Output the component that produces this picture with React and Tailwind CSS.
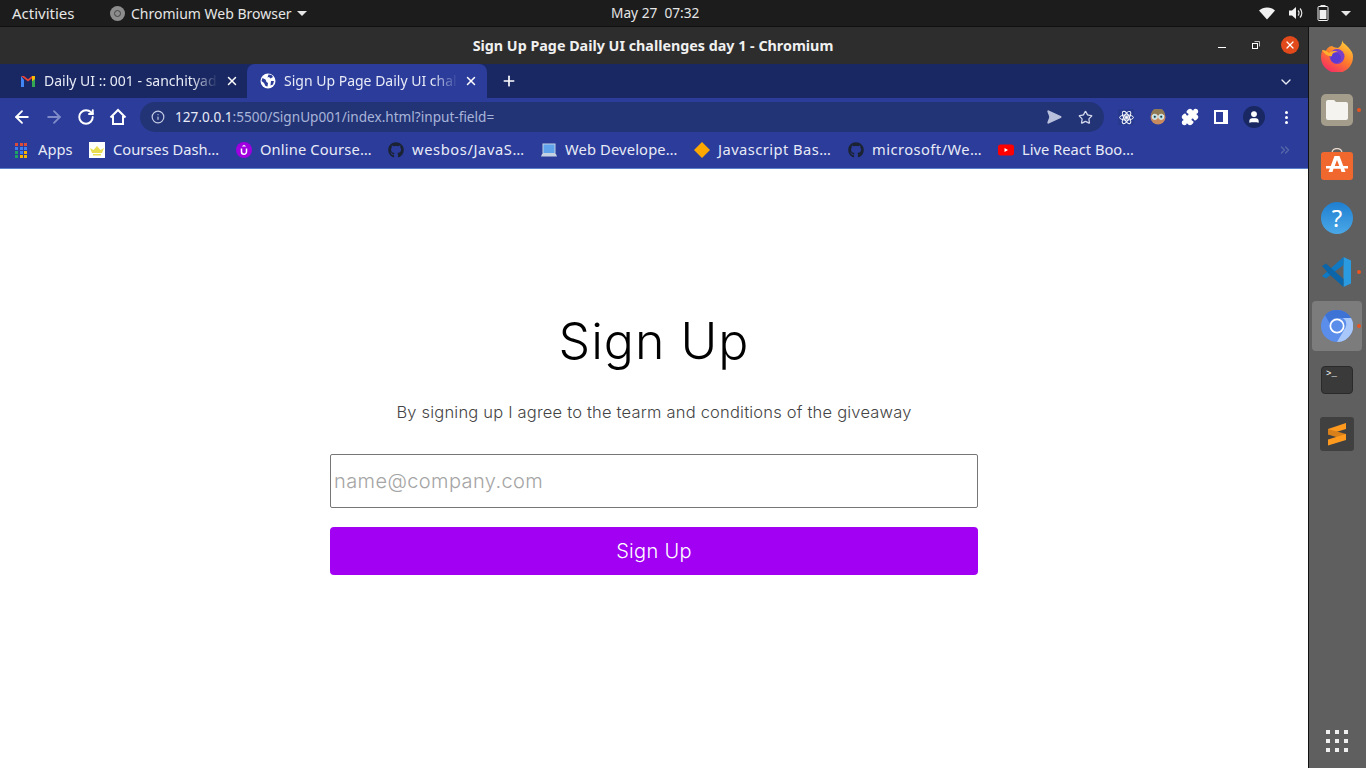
import { FaGithub } from 'react-icons/fa';
import { ArrowLeft, ArrowRight, RotateCw, Info, Star, Puzzle, User, X, Plus, ChevronDown, ChevronsRight, SendHorizontal } from 'lucide-react';

const bookmarks = [
    { label: 'Courses Dash…', width: 'w-[107px]', icon: <CrownIcon /> },
    { label: 'Online Course…', width: 'w-[112px] tracking-[0.15px]', icon: <UdemyIcon /> },
    { label: 'wesbos/JavaS…', width: 'w-[113px] tracking-[0.6px]', icon: <FaGithub className="w-4 h-4 text-[#1b2333]" /> },
    { label: 'Web Develope…', width: 'w-[113px] tracking-[0.15px]', icon: <LaptopIcon /> },
    { label: 'Javascript Bas…', width: 'w-[114px] tracking-[0.45px]', icon: <DiamondIcon /> },
    { label: 'microsoft/We…', width: 'w-[110px] tracking-[0.45px]', icon: <FaGithub className="w-4 h-4 text-[#1b2333]" /> },
    { label: 'Live React Boo…', width: 'w-[114px]', icon: <YoutubeIcon /> },
];

function CrownIcon() {
    return (
        <svg className="w-4 h-4" viewBox="0 0 16 16">
            <rect width="16" height="16" fill="#fff" />
            <path d="M1 6l3.5 2L8 4l3.5 4L15 6l-2 5H3z" fill="#e8dc50" />
            <rect x="4" y="12" width="8" height="1.5" fill="#e8dc50" />
        </svg>
    );
}

function UdemyIcon() {
    return (
        <svg className="w-4 h-4" viewBox="0 0 16 16">
            <circle cx="8" cy="8" r="8" fill="#a000e0" />
            <path d="M5.5 6.5v3.2a2.5 2.5 0 005 0V6.5" fill="none" stroke="#fff" strokeWidth="1.5" />
            <path d="M8 2.8l2.3 1.6H5.7z" fill="#fff" />
        </svg>
    );
}

function LaptopIcon() {
    return (
        <svg className="w-4 h-4" viewBox="0 0 16 16">
            <rect x="2" y="2" width="12" height="9.5" fill="#5ea3ec" stroke="#c5d2e2" />
            <path d="M1 12h14l1 2.5H0z" fill="#c5d2e2" />
        </svg>
    );
}

function DiamondIcon() {
    return (
        <svg className="w-4 h-4" viewBox="0 0 16 16">
            <path d="M8 0l8 8-8 8-8-8z" fill="#fca800" />
        </svg>
    );
}

function YoutubeIcon() {
    return (
        <svg className="w-4 h-4" viewBox="0 0 16 16">
            <rect x="0" y="2.5" width="16" height="11" rx="2.5" fill="#f00" />
            <path d="M6.5 6l3.5 2-3.5 2z" fill="#fff" />
        </svg>
    );
}

function AppsIcon() {
    const colors = ['#dd4b39', '#dd4b39', '#dd4b39', '#3d7ff0', '#3d7ff0', '#3d7ff0', '#1ea362', '#3d7ff0', '#f4b400', '#1ea362', '#f4b400', '#f4b400'];
    return (
        <div className="grid grid-cols-3 gap-[1px] w-[13px]">
            {colors.map((c, i) => (
                <div key={i} className="w-[3px] h-[3px]" style={{ backgroundColor: c }} />
            ))}
        </div>
    );
}

function GmailIcon() {
    return (
        <svg className="w-4 h-4" viewBox="0 0 16 16">
            <path d="M1 3v11h3V7z" fill="#4285f4" />
            <path d="M12 7v7h3V3z" fill="#34a853" />
            <path d="M1 3l7 5.5L15 3l-3 0-4 3.2L4 3z" fill="#ea4335" />
            <path d="M12 3h3v3l-3 2.2z" fill="#fbbc04" />
        </svg>
    );
}

function GlobeIcon() {
    return (
        <svg className="w-4 h-4" viewBox="0 0 16 16">
            <circle cx="8" cy="8" r="7.5" fill="#fff" />
            <path d="M2.5 5l3 1.5 1 2.5 1.5 1 -.5 3.5-2-.5-1.5-3-2.5-2zM8.5 1.5l3 .5 1.5 2-2.5 1.5-1.5-1.5-1.5.5zM11 8l3 0-1 3.5-2.5 1z" fill="#2b3c9b" />
        </svg>
    );
}

function HomeIcon() {
    return (
        <svg className="w-[18px] h-[18px]" viewBox="0 0 18 18" fill="none" stroke="#fff" strokeWidth="2">
            <path d="M1.500 9.500L9 2l7.500 7.500" strokeLinejoin="miter" />
            <path d="M4 8v8h10V8" />
        </svg>
    );
}

function ReactDevtoolsIcon() {
    return (
        <div className="w-4 h-4 bg-[#26398f] flex items-center justify-center">
            <svg className="w-[15px] h-[15px]" viewBox="0 0 24 24" fill="none" stroke="#fff" strokeWidth="1.6">
                <circle cx="12" cy="12" r="2" fill="#fff" />
                <ellipse cx="12" cy="12" rx="11" ry="4.2" />
                <ellipse cx="12" cy="12" rx="11" ry="4.2" transform="rotate(60 12 12)" />
                <ellipse cx="12" cy="12" rx="11" ry="4.2" transform="rotate(120 12 12)" />
            </svg>
        </div>
    );
}

function OwlIcon() {
    return (
        <svg className="w-4 h-4" viewBox="0 0 16 16">
            <circle cx="8" cy="8" r="7.5" fill="#c98a5e" />
            <path d="M1 6a7 7 0 0114 0z" fill="#8f7a55" />
            <circle cx="4.8" cy="7.8" r="2.6" fill="#a8dde0" stroke="#e8e8e8" />
            <circle cx="11.2" cy="7.8" r="2.6" fill="#a8dde0" stroke="#e8e8e8" />
            <circle cx="4.8" cy="7.8" r="1" fill="#234" />
            <circle cx="11.2" cy="7.8" r="1" fill="#234" />
        </svg>
    );
}

function FirefoxIcon() {
    return (
        <svg className="w-8 h-8" viewBox="0 0 32 32">
            <defs>
                <linearGradient id="ff" x1="0.8" y1="0" x2="0.2" y2="1">
                    <stop offset="0" stopColor="#ffd53a" />
                    <stop offset="0.5" stopColor="#ff7a2b" />
                    <stop offset="1" stopColor="#f2256a" />
                </linearGradient>
            </defs>
            <path d="M21 0c.5 3 4 4.500 6.500 7.500C30.500 11 32 13 32 17a16 16 0 01-32 0c0-3 .8-6 2-7.500.6 1.500 1.500 2.500 2.500 3C5 9 8 6 11 6c2 1.500 4.500 1.500 6 2C19.500 6 21.500 4 21 0z" fill="url(#ff)" />
            <circle cx="16" cy="16.500" r="7.500" fill="#7b3fc9" />
            <circle cx="15" cy="18" r="5" fill="#5a3ad0" />
            <path d="M1 10c3 0 5 1 7 3 2-2 6-3 9-1-4 0-6 1-6 4-3 1-7-1-10-6z" fill="#ffb02e" />
        </svg>
    );
}

function FilesIcon() {
    return (
        <div className="w-8 h-8 rounded-[5px] bg-[#a59d8c] flex items-center justify-center">
            <svg className="w-6 h-[20px]" viewBox="0 0 24 20">
                <path d="M1 2a2 2 0 012-2h6l2 2h10a2 2 0 012 2v14a2 2 0 01-2 2H3a2 2 0 01-2-2z" fill="#f4f3f0" />
            </svg>
        </div>
    );
}

function StoreIcon() {
    return (
        <svg className="w-8 h-[32px]" viewBox="0 0 32 32">
            <path d="M11 5c0-6 10-6 10 0" fill="none" stroke="#e9d8cb" strokeWidth="1.300" />
            <rect x="0" y="4" width="32" height="28" rx="3" fill="#f1682e" />
            <path d="M13.500 8h5l6 16h-4l-1-3.500h-7L11.500 24h-4zm2.500 4l-2.300 6h4.600z" fill="#fff" />
            <rect x="5" y="18" width="22" height="2.500" fill="#fff" />
        </svg>
    );
}

function HelpIcon() {
    return (
        <div className="w-8 h-8 rounded-full bg-[linear-gradient(180deg,#1f7fd0,#4aa8e8)] flex items-center justify-center text-white text-[24px] font-['Noto_Sans',sans-serif] leading-none">
            ?
        </div>
    );
}

function VscodeIcon() {
    return (
        <svg className="w-8 h-8" viewBox="0 0 32 32">
            <path d="M22.500 1L30 4.500v23L22.500 31z" fill="#2a9be0" />
            <path d="M22.500 1v8L10 18.500l-5 4L1 20l7-6 14.500-13z" fill="#0f79c4" />
            <path d="M1 10l4-2.500 17.500 15.500V31L8 18z" fill="#0b65a8" />
        </svg>
    );
}

function ChromiumIcon() {
    return (
        <svg className="w-8 h-8" viewBox="0 0 32 32">
            <circle cx="16" cy="16" r="16" fill="#5b8dea" />
            <path d="M16 0a16 16 0 0114 8H16a8 8 0 00-7.500 5L4 5a16 16 0 0112-5z" fill="#3e73d6" />
            <path d="M30 8a16 16 0 01-14 24l7-12a8 8 0 00-1-12z" fill="#a8c7fa" />
            <circle cx="16" cy="16" r="7.500" fill="#fff" />
            <circle cx="16" cy="16" r="5.800" fill="#5b8dea" />
        </svg>
    );
}

function TerminalIcon() {
    return (
        <div className="w-8 h-[28px] rounded-[4px] bg-[#3a3a3a] border border-[#2a2a2a] px-[4px] pt-[2px] text-white text-[9px] leading-[10px] font-['Liberation_Mono',monospace]">
            &gt;_
        </div>
    );
}

function SublimeIcon() {
    return (
        <div className="w-[34px] h-[34px] rounded-[3px] bg-[#404040] flex items-center justify-center">
            <svg className="w-5 h-6" viewBox="0 0 20 24">
                <path d="M19 1v6L1 12.500V7z" fill="#ff9a1f" />
                <path d="M1 12.500l18 5.500v-6L1 7z" fill="#d9801a" />
                <path d="M19 12v6L1 23.500v-6z" fill="#ff9a1f" />
            </svg>
        </div>
    );
}

function DockItem({ children, running, active }) {
    return (
        <div className={`relative w-[50px] h-[50px] rounded-[4px] flex items-center justify-center ${active ? 'bg-[#7c7c7c]' : ''}`}>
            {children}
            {running && <div className="absolute right-[1px] top-[23px] w-[4px] h-[4px] rounded-full bg-[#e95420]" />}
        </div>
    );
}

export default function App() {
    return (
        <div className="w-[1366px] h-[768px] overflow-hidden flex flex-col bg-white font-['Noto_Sans',sans-serif]">
            {/* Top bar */}
            <div className="h-[27px] shrink-0 bg-[#1c1c1c] border-b border-[#111] relative flex items-center text-[14px] text-[#e6e6e6]">
                <span className="ml-3 w-[98px] text-[15px]">Activities</span>
                <div className="w-[15px] h-[15px] rounded-full bg-[#8d8d8d] flex items-center justify-center">
                    <div className="w-[7px] h-[7px] rounded-full border border-[#444]" />
                </div>
                <span className="ml-[6px]">Chromium Web Browser</span>
                <div className="ml-[5px] w-0 h-0 border-x-[5px] border-x-transparent border-t-[5px] border-t-[#e6e6e6]" />
                <span className="absolute left-[611px] whitespace-pre text-[13.700px]">May 27  07:32</span>
                <div className="ml-auto flex items-center mr-[15px]">
                    <svg className="w-4 h-4 mr-[13px]" viewBox="0 0 16 16">
                        <path d="M0 5.500C4.500 1.500 11.500 1.500 16 5.500L8 14.500z" fill="#f2f2f2" />
                    </svg>
                    <svg className="w-4 h-4 mr-[13px]" viewBox="0 0 16 16" fill="none" stroke="#e6e6e6">
                        <path d="M1 5.500h3L8 2v12l-4-3.500H1z" fill="#f2f2f2" stroke="none" />
                        <path d="M10 5.500a3.500 3.500 0 010 5M12 3.500a6.500 6.500 0 010 9" strokeWidth="1.200" />
                    </svg>
                    <svg className="w-[12px] h-4 mr-[12px]" viewBox="0 0 12 16">
                        <rect x="3.500" y="0" width="5" height="2" fill="#e6e6e6" />
                        <rect x="1" y="1.500" width="10" height="14" rx="1" fill="none" stroke="#f2f2f2" />
                        <rect x="2.500" y="5" width="7" height="9" fill="#f2f2f2" />
                    </svg>
                    <div className="w-0 h-0 border-x-[5px] border-x-transparent border-t-[5px] border-t-[#e6e6e6]" />
                </div>
            </div>

            <div className="flex flex-1 min-h-0">
                <div className="w-[1308px] flex flex-col">
                    {/* Title bar */}
                    <div className="h-[37px] shrink-0 bg-[#2d2d2d] relative flex items-center justify-center text-[14.300px] font-bold text-[#f0f0f0]">
                        <span className="mr-[2px]">Sign Up Page Daily UI challenges day 1 - Chromium</span>
                        <div className="absolute right-[9px] top-[9px] w-[18px] h-[18px] rounded-full bg-[#e2491b] flex items-center justify-center">
                            <X className="w-3 h-3 text-white" strokeWidth={2.500} />
                        </div>
                        <svg className="absolute right-[48px] top-[14px] w-[8px] h-[8px]" viewBox="0 0 8 8" fill="none" stroke="#fff">
                            <rect x="0.500" y="2.500" width="5" height="5" />
                            <path d="M2.500 .5h5v5" strokeOpacity="0.700" />
                        </svg>
                        <div className="absolute right-[82px] top-[20px] w-[8px] h-[1px] bg-white" />
                    </div>

                    {/* Tab strip */}
                    <div className="h-[34px] shrink-0 bg-[#192862] flex items-end text-[14px] text-[#e8ebf6] relative">
                        <div className="w-[247px] h-[34px] flex items-center pl-[20px] relative">
                            <GmailIcon />
                            <span className="ml-2 pb-[2px] w-[174px] whitespace-nowrap overflow-hidden [mask-image:linear-gradient(90deg,#000_85%,transparent)]">Daily UI :: 001 - sanchityada</span>
                            <X className="absolute left-[225px] w-[14px] h-[14px] text-white" strokeWidth={2.500} />
                        </div>
                        <div className="w-[240px] h-[34px] rounded-t-[8px] bg-[#2b3c9b] flex items-center pl-[13px] relative">
                            <GlobeIcon />
                            <span className="ml-2 pb-[2px] w-[174px] whitespace-nowrap overflow-hidden [mask-image:linear-gradient(90deg,#000_85%,transparent)]">Sign Up Page Daily UI challenges</span>
                            <X className="absolute left-[217px] w-[14px] h-[14px] text-white" strokeWidth={2.500} />
                        </div>
                        <Plus className="ml-[14px] mb-[9px] w-4 h-4 text-white" strokeWidth={2.500} />
                        <ChevronDown className="absolute right-[14px] top-[10px] w-[16px] h-[16px] text-[#e8ebf6]" strokeWidth={2} />
                    </div>

                    {/* Toolbar */}
                    <div className="h-[34px] shrink-0 bg-[#2b3c9b] flex items-start">
                        <div className="w-[140px] flex items-center h-[38px] pl-[12px] gap-[12px]">
                            <ArrowLeft className="w-[20px] h-[20px] text-white" strokeWidth={2.200} />
                            <ArrowRight className="w-[20px] h-[20px] text-[#7f8cc8]" strokeWidth={2.200} />
                            <RotateCw className="w-[18px] h-[18px] mx-[1px] text-white" strokeWidth={2.600} />
                            <div className="w-[20px] flex justify-center"><HomeIcon /></div>
                        </div>
                        <div className="mt-[4px] w-[964px] h-[30px] rounded-full bg-[#233476] flex items-center pl-[11px] pr-[10px] text-[13.600px]">
                            <Info className="w-[14px] h-[14px] text-[#c5cce6]" />
                            <span className="ml-[10px] text-[#e8ebf6]">127.0.0.1</span>
                            <span className="text-[#a9b4da]">:5500/SignUp001/index.html?input-field=</span>
                            <SendHorizontal className="ml-auto w-[16px] h-[16px] text-[#b8c0dc] fill-[#b8c0dc]" />
                            <Star className="ml-[16px] mr-[1px] w-[15px] h-[15px] text-[#d5daee]" strokeWidth={2} />
                        </div>
                        <div className="flex-1 flex items-center h-[38px] pl-[14px]">
                            <ReactDevtoolsIcon />
                            <div className="ml-[16px]"><OwlIcon /></div>
                            <Puzzle className="ml-[15px] w-[18px] h-[18px] text-white fill-white" />
                            <div className="ml-[15px] w-[14px] h-[14px] border-[2px] border-white border-r-[5px] bg-[#2b3c9b]" />
                            <div className="ml-[15px] w-[22px] h-[22px] rounded-full bg-[#192862] flex items-center justify-center">
                                <User className="w-[14px] h-[14px] text-white fill-white" />
                            </div>
                            <div className="ml-[20px] flex flex-col gap-[2px]">
                                <div className="w-[3px] h-[3px] rounded-full bg-white" />
                                <div className="w-[3px] h-[3px] rounded-full bg-white" />
                                <div className="w-[3px] h-[3px] rounded-full bg-white" />
                            </div>
                        </div>
                    </div>

                    {/* Bookmarks */}
                    <div className="h-[37px] shrink-0 bg-[#2b3c9b] border-b border-[#5b7fc8] flex items-center pl-[15px] text-[14.700px] text-[#e8ebf6] relative">
                        <AppsIcon />
                        <span className="ml-[10px] mr-[16px] pb-[2px] w-[35px]">Apps</span>
                        {bookmarks.map((b) => (
                            <div key={b.label} className="flex items-center gap-2 mr-[16px]">
                                {b.icon}
                                <span className={`${b.width} pb-[2px] whitespace-nowrap`}>{b.label}</span>
                            </div>
                        ))}
                        <ChevronsRight className="absolute right-[16px] top-[11px] w-[14px] h-[14px] text-[#5566a8]" strokeWidth={2.500} />
                    </div>

                    {/* Page */}
                    <div className="flex-1 bg-white flex flex-col items-center pt-[138px] font-['Inter',sans-serif]">
                        <h1 className="text-[50px] leading-[68px] tracking-[1px] font-light text-black">Sign Up</h1>
                        <p className="mt-[25px] text-[16.500px] leading-[24px] tracking-[0.2px] font-light text-[#444]">By signing up I agree to the tearm and conditions of the giveaway</p>
                        <input
                            type="email"
                            placeholder="name@company.com"
                            className="mt-[30px] w-[648px] h-[54px] border border-[#767676] rounded-[2px] px-[3px] text-[20px] tracking-[0.4px] font-light outline-none placeholder:text-[#a5a5a5]"
                        />
                        <button className="mt-[19px] w-[648px] h-[48px] rounded-[4px] bg-[#a100f2] text-white text-[20px] tracking-[0.3px] font-light">Sign Up</button>
                    </div>
                </div>

                {/* Dock */}
                <div className="w-[58px] shrink-0 bg-[#5f5f5f] border-l border-[#111] flex flex-col items-center gap-[4px] pt-[4px] pr-[1px] relative">
                    <DockItem><FirefoxIcon /></DockItem>
                    <DockItem running><FilesIcon /></DockItem>
                    <DockItem><StoreIcon /></DockItem>
                    <DockItem><HelpIcon /></DockItem>
                    <DockItem running><VscodeIcon /></DockItem>
                    <DockItem running active><ChromiumIcon /></DockItem>
                    <DockItem><TerminalIcon /></DockItem>
                    <DockItem><SublimeIcon /></DockItem>
                    <div className="absolute bottom-[16px] left-[17px] grid grid-cols-3 gap-[5px]">
                        {[...Array(9)].map((_, i) => (
                            <div key={i} className="w-[4px] h-[4px] bg-[#f0f0f0]" />
                        ))}
                    </div>
                </div>
            </div>
        </div>
    );
}
